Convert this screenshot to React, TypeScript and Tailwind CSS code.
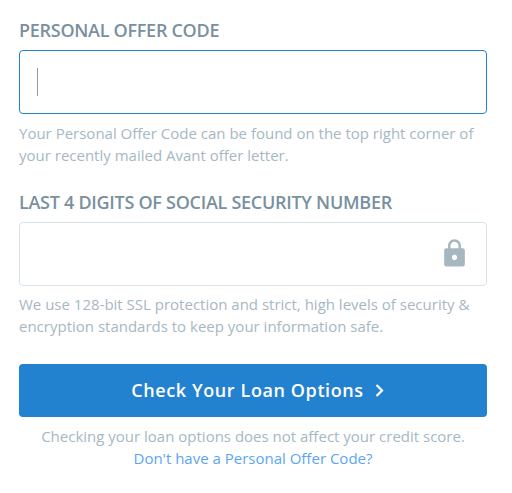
import type { ReactNode } from "react";

function LockIcon() {
  return (
    <svg className="mb-px" width="31" height="31" viewBox="0 0 24 24" fill="#a6b7c1" aria-hidden="true">
      <path d="M18.500 8H17V6c0-2.760-2.240-5-5-5S7 3.240 7 6v2H5.500C4.670 8 4 8.670 4 9.500v11c0 .83.67 1.500 1.500 1.500h13c.83 0 1.500-.67 1.500-1.500v-11c0-.83-.67-1.500-1.500-1.500zM12 17c-1.100 0-2-.9-2-2s.9-2 2-2 2 .9 2 2-.9 2-2 2zm3.100-9H8.900V6c0-1.710 1.390-3.100 3.100-3.100s3.100 1.390 3.100 3.100v2z" />
    </svg>
  );
}

function Label({ htmlFor, children }: { htmlFor: string; children: ReactNode }) {
  return (
    <label
      htmlFor={htmlFor}
      className="block whitespace-nowrap text-[18px] leading-6 font-semibold tracking-[-0.28px] text-[#7a909e]"
    >
      {children}
    </label>
  );
}

export default function App() {
  return (
    <form
      className="h-[493px] w-[512px] bg-white pt-[18px] pl-[19px] font-['Open_Sans',sans-serif] text-[15px] leading-[22px] text-[#a6b8c2]"
      onSubmit={(e) => e.preventDefault()}
    >
      <div className="w-[468px]">
        <Label htmlFor="offer-code">PERSONAL OFFER CODE</Label>
        <div className="mt-2 flex h-16 items-center rounded-[4px] border border-[#2281cf] pl-[17px]">
          <span className="h-7 w-px bg-[#999999]" />
          <input id="offer-code" className="min-w-0 flex-1 caret-transparent outline-none" />
        </div>
        <p className="mt-2 whitespace-nowrap">
          Your Personal Offer Code can be found on the top right corner of
          <br />
          your recently mailed Avant offer letter.
        </p>
        <div className="mt-6">
          <Label htmlFor="ssn">LAST 4 DIGITS OF SOCIAL SECURITY NUMBER</Label>
        </div>
        <div className="mt-2 flex h-16 items-center rounded-[4px] border border-[#d7e3e8] pr-4">
          <input id="ssn" className="min-w-0 flex-1 outline-none" />
          <LockIcon />
        </div>
        <p className="mt-[7px] whitespace-nowrap">
          We use 128-bit SSL protection and strict, high levels of security &amp;
          <br />
          encryption standards to keep your information safe.
        </p>
        <button
          type="submit"
          className="mt-[27px] flex h-[53px] w-full items-center justify-center gap-[11px] rounded-[4px] bg-[#2382cf] pl-[9px] text-[18px] font-semibold tracking-[0.6px] text-white"
        >
          <span className="-mt-0.5">Check Your Loan Options</span>
          <svg width="9" height="13" viewBox="0 0 9 13" fill="none" stroke="currentColor" strokeWidth="2.2">
            <path d="M1.500 1l5.500 5.500L1.500 12" />
          </svg>
        </button>
        <p className="mt-2 text-center whitespace-nowrap">
          Checking your loan options does not affect your credit score.
          <br />
          <a href="#" className="text-[#5da5f2]">Don't have a Personal Offer Code?</a>
        </p>
      </div>
    </form>
  );
}
